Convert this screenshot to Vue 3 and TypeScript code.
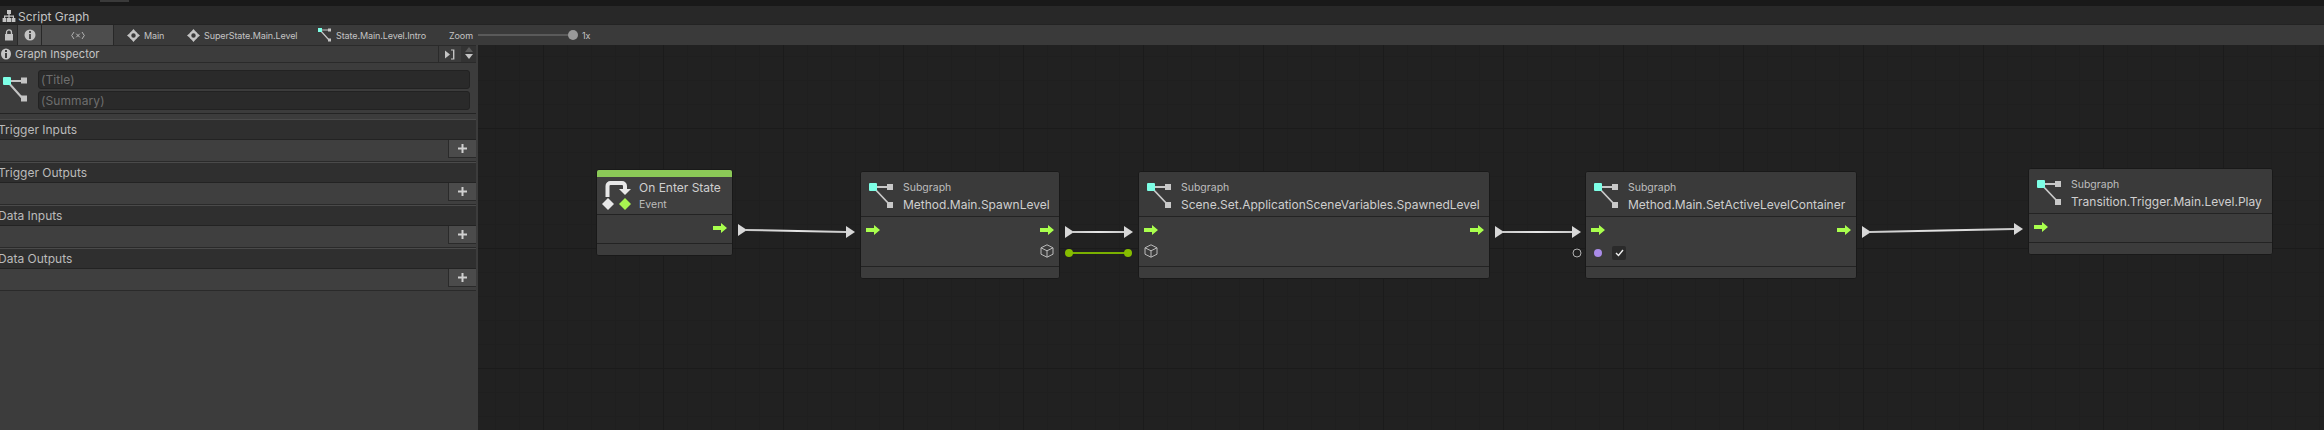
<template>
  <div class="window">
    <div class="top-strip"><div class="top-tab"></div></div>
    <div class="title-bar">
      <svg class="title-icon" width="14" height="14" viewBox="0 0 14 14">
        <path d="M5 1h4v4H7.600v1.600h4.400V9h1.400v4H9.600V9h1.200V7.800H7.600V9H9v4H5V9h1.400V7.800H3.200V9h1.200v4H.6V9H2V6.600h4.400V5H5z" fill="#c4c4c4" />
      </svg>
      <span>Script Graph</span>
    </div>
    <div class="toolbar">
      <div class="tool-btn lock">
        <svg width="10" height="12" viewBox="0 0 10 12">
          <path d="M2.500 5V3.400a2.500 2.500 0 0 1 5 0V5" fill="none" stroke="#c4c4c4" stroke-width="1.300" />
          <rect x="1" y="5" width="8" height="6.500" fill="#c4c4c4" />
        </svg>
      </div>
      <div class="tool-btn info">
        <svg width="12" height="12" viewBox="0 0 12 12">
          <circle cx="6" cy="6" r="5.500" fill="#c4c4c4" />
          <rect x="5" y="2" width="2" height="2" fill="#4e4e4e" />
          <rect x="5" y="5" width="2" height="5" fill="#4e4e4e" />
        </svg>
      </div>
      <div class="tool-btn vars">
        <svg width="14" height="9" viewBox="0 0 14 9">
          <path d="M3 1 .7 4.500 3 8M11 1l2.300 3.500L11 8M5.200 2.700l3.600 3.600M8.800 2.700 5.200 6.300" fill="none" stroke="#c0c0c0" stroke-width=".9" />
        </svg>
      </div>
      <div class="crumbs">
        <div v-for="c in crumbs" :key="c.label" class="crumb" :style="{ width: c.width + 'px' }">
          <svg v-if="c.kind === 'state'" class="crumb-icon" width="13" height="13" viewBox="0 0 14 14">
            <path d="M7 0l2.500 3h-5zM7 14l-2.500-3h5zM0 7l3-2.500v5zM14 7l-3 2.500v-5z" fill="#c4c4c4" />
            <circle cx="7" cy="7" r="3.600" fill="none" stroke="#c4c4c4" stroke-width="2.400" />
          </svg>
          <svg v-else class="crumb-icon" width="14" height="14" viewBox="0 0 14 14">
            <path d="M2 2h9M2 2l9 10" stroke="#c4c4c4" stroke-width="1.200" fill="none" />
            <rect x="0" y="0" width="4" height="4" fill="#7dffe6" />
            <rect x="10" y="0.500" width="3" height="3" fill="#c4c4c4" />
            <rect x="10" y="10.500" width="3" height="3" fill="#c4c4c4" />
          </svg>
          <span>{{ c.label }}</span>
        </div>
      </div>
      <span class="zoom-label">Zoom</span>
      <div class="slider"><div class="knob"></div></div>
      <span class="zoom-value">1x</span>
    </div>

    <div class="main">
      <aside class="inspector">
        <div class="ins-head">
          <div class="ins-title">
            <svg width="10" height="12" viewBox="0 0 10 12">
              <ellipse cx="5" cy="6" rx="5" ry="5.600" fill="#c4c4c4" />
              <rect x="4" y="2" width="2" height="2" fill="#3c3c3c" />
              <rect x="4" y="5" width="2" height="5" fill="#3c3c3c" />
            </svg>
            <span>Graph Inspector</span>
          </div>
          <div class="ins-pin">
            <svg width="10" height="11" viewBox="0 0 10 11">
              <path d="M0 1.500 5 5.500 0 9.500z" fill="#c4c4c4" />
              <path d="M6 .5h3.400v10H6V9.400h2V1.600H6z" fill="#c4c4c4" />
            </svg>
          </div>
          <div class="ins-scroll">
            <svg width="10" height="7" viewBox="0 0 10 7"><path d="M5 1 9 6H1z" fill="#5a5a5a" /></svg>
            <svg width="10" height="7" viewBox="0 0 10 7"><path d="M1 1h8L5 6z" fill="#c4c4c4" /></svg>
          </div>
        </div>
        <div class="meta">
          <svg class="meta-icon" width="24" height="26" viewBox="0 0 24 26">
            <path d="M4 4h17M4 4l17 19" stroke="#c4c4c4" stroke-width="2" fill="none" />
            <rect x="0" y="0" width="8" height="8" rx="1" fill="#7dffe6" />
            <rect x="18" y="0.500" width="6" height="6" fill="#c4c4c4" />
            <rect x="18" y="18.500" width="6" height="6" fill="#c4c4c4" />
          </svg>
          <div class="meta-fields">
            <div class="field">(Title)</div>
            <div class="field">(Summary)</div>
          </div>
        </div>
        <div v-for="s in sections" :key="s" class="section">
          <div class="section-head">{{ s }}</div>
          <div class="section-body">
            <div class="add-btn">
              <svg width="9" height="9" viewBox="0 0 9 9"><path d="M3.500 0h2v3.500H9v2H5.500V9h-2V5.500H0v-2h3.500z" fill="#d0d0d0" /></svg>
            </div>
          </div>
        </div>
      </aside>

      <div class="canvas">
        <svg class="wires" width="1846" height="385" viewBox="478 45 1846 385">
          <defs>
            <linearGradient v-for="w in wires" :id="w.id" :key="w.id" gradientUnits="userSpaceOnUse" :x1="w.x1" y1="0" :x2="w.x2" y2="0">
              <stop offset="0" stop-color="#c8c8c8" />
              <stop offset="0.5" stop-color="#e6e6e6" />
              <stop offset="1" stop-color="#c8c8c8" />
            </linearGradient>
          </defs>
          <g v-for="w in wires" :key="w.id">
            <line :x1="w.x1" :y1="w.y1" :x2="w.x2" :y2="w.y2" :stroke="`url(#${w.id})`" stroke-width="2" />
            <path :d="`M${w.x1 - 8} ${w.y1 - 6}l9 6-9 6z`" fill="#d8d8d8" />
            <path :d="`M${w.x2} ${w.y2 - 6}l9 6-9 6z`" fill="#d8d8d8" />
          </g>
          <line x1="1069" y1="253" x2="1128" y2="253" stroke="#7ab000" stroke-width="2" />
          <circle cx="1069" cy="253" r="4" fill="#86bd00" />
          <circle cx="1128" cy="253" r="4" fill="#86bd00" />
          <circle cx="1577" cy="253" r="4" fill="none" stroke="#b0b0b0" stroke-width="1" />
        </svg>

        <div
          v-for="n in nodes"
          :key="n.title"
          class="node"
          :style="{ left: n.x - 478 + 'px', top: n.y - 45 + 'px', width: n.w + 'px' }"
        >
          <div v-if="n.event" class="node-bar"></div>
          <div class="node-head" :class="{ event: n.event }">
            <svg v-if="n.event" class="node-icon" width="29" height="30" viewBox="0 0 29 30">
              <path d="M5.500 16V5a3 3 0 0 1 3-3H20a3 3 0 0 1 3 3v4" fill="none" stroke="#e8e8e8" stroke-width="4" />
              <path d="M17 8h12l-6 6z" fill="#e8e8e8" />
              <path d="M6 17l6 6-6 6-6-6z" fill="#e8e8e8" />
              <path d="M23 17l6 6-6 6-6-6z" fill="#a8f550" />
            </svg>
            <svg v-else class="node-icon" width="25" height="25" viewBox="0 0 25 25">
              <path d="M4 4h20M4 4l17 18" stroke="#c8c8c8" stroke-width="1.800" fill="none" />
              <rect x="0" y="0" width="8" height="8" rx="1" fill="#7dffe6" />
              <rect x="18" y="1" width="6" height="6" fill="#c8c8c8" />
              <rect x="18" y="19" width="6" height="6" fill="#c8c8c8" />
            </svg>
            <div class="node-text">
              <template v-if="n.event">
                <div class="node-title">{{ n.title }}</div>
                <div class="node-kind">{{ n.kind }}</div>
              </template>
              <template v-else>
                <div class="node-kind">{{ n.kind }}</div>
                <div class="node-title">{{ n.title }}</div>
              </template>
            </div>
          </div>
          <div class="node-body" :class="{ tall: n.row2 }">
            <div class="port-row">
              <svg v-if="n.input" width="14" height="10" viewBox="0 0 14 10"><path d="M0 3h8V0l6 5-6 5V7H0z" fill="#a9ff4d" /></svg>
              <span v-else></span>
              <svg v-if="n.output" width="14" height="10" viewBox="0 0 14 10"><path d="M0 3h8V0l6 5-6 5V7H0z" fill="#a9ff4d" /></svg>
            </div>
            <div v-if="n.row2 === 'bool'" class="port-row bool-row">
              <div class="bool-port">
                <span class="purple"></span>
                <span class="check">
                  <svg width="9" height="8" viewBox="0 0 9 8"><path d="M1 4l2.500 2.500L8 1" fill="none" stroke="#eee" stroke-width="1.400" /></svg>
                </span>
              </div>
            </div>
            <div v-else-if="n.row2" class="port-row second">
              <svg v-if="n.row2 === 'cubeIn'" width="14" height="14" viewBox="0 0 14 14"><path d="M7 .8l6 3v6.400L7 13.200l-6-3V3.800zM1 3.800l6 3 6-3M7 6.800v6.400" fill="none" stroke="#bbb" stroke-width="1" /></svg>
              <span v-else></span>
              <svg v-if="n.row2 === 'cubeOut'" width="14" height="14" viewBox="0 0 14 14"><path d="M7 .8l6 3v6.400L7 13.200l-6-3V3.800zM1 3.800l6 3 6-3M7 6.800v6.400" fill="none" stroke="#bbb" stroke-width="1" /></svg>
            </div>
          </div>
          <div class="node-foot"></div>
        </div>
      </div>
    </div>
  </div>
</template>

<script setup lang="ts">
interface GraphNode {
  title: string
  kind: string
  x: number
  y: number
  w: number
  event?: boolean
  input?: boolean
  output?: boolean
  row2?: 'cubeIn' | 'cubeOut' | 'bool'
}

const crumbs = [
  { label: 'Main', kind: 'state', width: 60 },
  { label: 'SuperState.Main.Level', kind: 'state', width: 131 },
  { label: 'State.Main.Level.Intro', kind: 'graph', width: 131 },
]

const sections = ['Trigger Inputs', 'Trigger Outputs', 'Data Inputs', 'Data Outputs']

const nodes: GraphNode[] = [
  { title: 'On Enter State', kind: 'Event', x: 596, y: 169, w: 137, event: true, output: true },
  { title: 'Method.Main.SpawnLevel', kind: 'Subgraph', x: 860, y: 171, w: 200, input: true, output: true, row2: 'cubeOut' },
  { title: 'Scene.Set.ApplicationSceneVariables.SpawnedLevel', kind: 'Subgraph', x: 1138, y: 171, w: 352, input: true, output: true, row2: 'cubeIn' },
  { title: 'Method.Main.SetActiveLevelContainer', kind: 'Subgraph', x: 1585, y: 171, w: 272, input: true, output: true, row2: 'bool' },
  { title: 'Transition.Trigger.Main.Level.Play', kind: 'Subgraph', x: 2028, y: 168, w: 245, input: true },
]

const wires = [
  { id: 'w1', x1: 746, y1: 230, x2: 846, y2: 232 },
  { id: 'w2', x1: 1073, y1: 232, x2: 1124, y2: 232 },
  { id: 'w3', x1: 1503, y1: 232, x2: 1572, y2: 232 },
  { id: 'w4', x1: 1870, y1: 232, x2: 2014, y2: 229 },
]
</script>

<style>
html,
body {
  margin: 0;
  background: #202020;
}
</style>

<style scoped>
.window {
  width: 2324px;
  height: 430px;
  display: flex;
  flex-direction: column;
  overflow: hidden;
  font-family: Inter, "Liberation Sans", sans-serif;
  color: #c4c4c4;
  background: #202020;
}

.top-strip {
  height: 6px;
  flex: none;
  background: #191919;
  padding-left: 100px;
}

.top-tab {
  width: 29px;
  height: 2px;
  background: #3a3a3a;
}

.title-bar {
  height: 18px;
  box-sizing: border-box;
  flex: none;
  display: flex;
  align-items: center;
  gap: 2px;
  padding: 2px 0 0 2px;
  background: #282828;
  font-size: 12px;
}

.title-icon {
  flex: none;
}

.toolbar {
  height: 21px;
  flex: none;
  display: flex;
  align-items: center;
  background: #3a3a3a;
  border-top: 1px solid #232323;
  font-size: 9px;
  letter-spacing: -0.1px;
  box-sizing: border-box;
}

.tool-btn {
  height: 100%;
  display: flex;
  align-items: center;
  justify-content: center;
  box-sizing: border-box;
  border-right: 1px solid #282828;
}

.lock {
  width: 18px;
}

.info {
  width: 24px;
  background: #4e4e4e;
}

.vars {
  width: 72px;
  background: #4d4d4d;
}

.crumbs {
  display: flex;
  margin-left: 13px;
}

.crumb {
  display: flex;
  align-items: center;
  gap: 4px;
}

.crumb-icon {
  flex: none;
}

.zoom-label {
  width: 29px;
}

.slider {
  position: relative;
  width: 95px;
  height: 2px;
  background: #5a5a5a;
}

.knob {
  position: absolute;
  right: -5px;
  top: -4px;
  width: 10px;
  height: 10px;
  border-radius: 50%;
  background: #999;
}

.zoom-value {
  margin-left: 9px;
}

.main {
  flex: 1;
  min-height: 0;
  display: flex;
}

.inspector {
  width: 478px;
  flex: none;
  box-sizing: border-box;
  padding-right: 2px;
  background: #3c3c3c;
  overflow: hidden;
}

.ins-head {
  height: 18px;
  box-sizing: border-box;
  display: flex;
  border-top: 1px solid #2a2a2a;
  border-bottom: 1px solid #2a2a2a;
}

.ins-title {
  width: 439px;
  flex: none;
  box-sizing: border-box;
  display: flex;
  align-items: center;
  gap: 4px;
  padding-left: 1px;
  font-size: 11px;
  letter-spacing: 0.05px;
  border-right: 1px solid #2a2a2a;
}

.ins-pin {
  width: 22px;
  display: flex;
  align-items: center;
  justify-content: center;
}

.ins-scroll {
  width: 15px;
  display: flex;
  flex-direction: column;
  align-items: center;
  background: #333;
}

.meta {
  height: 51px;
  box-sizing: border-box;
  display: flex;
  margin-bottom: 5px;
  padding: 7px 6px 0 3px;
  border-bottom: 1px solid #242424;
}

.meta-icon {
  flex: none;
  margin: 7px 11px 0 0;
}

.meta-fields {
  flex: 1;
  display: flex;
  flex-direction: column;
  gap: 2px;
}

.field {
  height: 19px;
  box-sizing: border-box;
  padding-left: 2px;
  line-height: 17px;
  font-size: 12px;
  letter-spacing: 0.1px;
  color: #6e6e6e;
  background: #2a2a2a;
  border: 1px solid #222;
  border-radius: 3px;
}

.section {
  height: 43px;
  display: flex;
  flex-direction: column;
}

.section-head {
  height: 21px;
  flex: none;
  box-sizing: border-box;
  border-top: 1px solid #4a4a4a;
  border-bottom: 1px solid #232323;
  text-indent: -2px;
  line-height: 19px;
  font-size: 12px;
  color: #bbb;
  background: #2f2f2f;
}

.section-body {
  flex: 1;
  display: flex;
  justify-content: flex-end;
  align-items: flex-start;
  background: #3f3f3f;
  border-bottom: 1px solid #2a2a2a;
}

.add-btn {
  width: 28px;
  height: 18px;
  box-sizing: border-box;
  display: flex;
  align-items: center;
  justify-content: center;
  background: #4b4b4b;
  border-left: 1px solid #2a2a2a;
  border-bottom: 1px solid #2a2a2a;
}

.canvas {
  position: relative;
  flex: 1;
  background-color: #212121;
  background-image:
    repeating-linear-gradient(90deg, transparent 0 65px, #1b1b1b 65px 66px, transparent 66px 120px),
    repeating-linear-gradient(0deg, transparent 0 61px, #1b1b1b 61px 62px, transparent 62px 120px),
    repeating-linear-gradient(90deg, transparent 0 17px, #1f1f1f 17px 18px, transparent 18px 24px),
    repeating-linear-gradient(180deg, transparent 0 11px, #1f1f1f 11px 12px, transparent 12px 24px);
}

.wires {
  position: absolute;
  left: 0;
  top: 0;
  pointer-events: none;
}

.node {
  position: absolute;
  box-sizing: border-box;
  display: flex;
  flex-direction: column;
  background: #3c3c3c;
  border: 1px solid #191919;
  border-radius: 3px;
  overflow: hidden;
}

.node-bar {
  height: 7px;
  background: #8bc957;
}

.node-head {
  height: 45px;
  box-sizing: border-box;
  display: flex;
  align-items: center;
  padding-left: 8px;
  border-bottom: 1px solid #232323;
  background: #3a3a3a;
}

.node-head.event {
  height: 38px;
  padding-left: 5px;
  background: #3f3f3f;
}

.node-icon {
  flex: none;
  margin: 3px 9px 0 0;
}

.node-head.event .node-icon {
  margin: 0 8px 0 0;
}

.node-text {
  display: flex;
  flex-direction: column;
  gap: 1px;
  margin-top: 4px;
}

.node-head.event .node-text {
  margin-top: 0;
}

.node-title {
  font-size: 12px;
  line-height: 17px;
  color: #cfcfcf;
  white-space: nowrap;
}

.node-kind {
  font-size: 10.5px;
  line-height: 15px;
  color: #bdbdbd;
}

.node-body {
  height: 29px;
  box-sizing: border-box;
  padding: 8px 5px 0;
  border-bottom: 1px solid #232323;
}

.node-body.tall {
  height: 50px;
}

.port-row {
  display: flex;
  justify-content: space-between;
  align-items: center;
}

.port-row.second {
  margin-top: 9px;
}

.port-row.bool-row {
  margin-top: 11px;
}

.bool-port {
  display: flex;
  align-items: center;
  gap: 10px;
  margin-left: 3px;
}

.purple {
  width: 8px;
  height: 8px;
  border-radius: 50%;
  background: #a98be8;
}

.check {
  width: 14px;
  height: 14px;
  display: flex;
  align-items: center;
  justify-content: center;
  background: #2a2a2a;
  border-radius: 2px;
}

.node-foot {
  height: 11px;
  flex: none;
  background: #3c3c3c;
}
</style>
